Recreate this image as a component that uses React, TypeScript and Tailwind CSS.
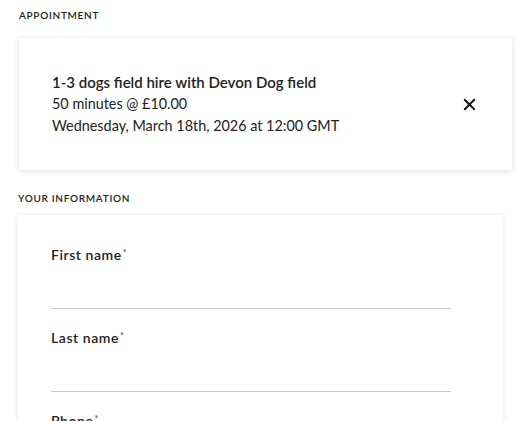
import { X } from 'lucide-react';

const font = { fontFamily: '"Source Sans Pro", Lato, "Noto Sans", sans-serif' };

function SectionTitle({ children }: { children: string }) {
  return (
    <h2 className="text-[10px] font-semibold uppercase tracking-[0.07em] text-[#222]">{children}</h2>
  );
}

function Field({ label }: { label: string }) {
  return (
    <div className="flex flex-col">
      <label className="text-[14px] font-semibold tracking-[0.04em] text-[#222] leading-5">
        {label}
        <sup className="text-[9px] text-[#555] ml-px">*</sup>
      </label>
      <input className="mt-5 h-6 w-[400px] border-b border-[#c8c8c8] outline-none" />
    </div>
  );
}

export default function App() {
  return (
    <div className="h-screen bg-white overflow-hidden" style={font}>
      <div className="pl-[19px] pt-[8px]">
        <SectionTitle>Appointment</SectionTitle>
        <div className="mt-[15px] w-[493px] h-[132px] bg-white shadow-[0_1px_6px_rgba(0,0,0,0.13)] flex items-center justify-between pl-[33px] pr-[33px]">
          <div className="text-[14.4px] leading-[22px] text-[#222]">
            <div className="font-semibold text-[15px]">1-3 dogs field hire with Devon Dog field</div>
            <div>50 minutes @ £10.00</div>
            <div>Wednesday, March 18th, 2026 at 12:00 GMT</div>
          </div>
          <button className="text-[#111]">
            <X size={19} strokeWidth={2.4} />
          </button>
        </div>
      </div>
      <div className="pl-[18px] mt-[21px]">
        <SectionTitle>Your information</SectionTitle>
        <div className="mt-[9px] w-[485px] bg-white shadow-[0_1px_6px_rgba(0,0,0,0.12)] pl-[33px] pt-[30px] pb-8 flex flex-col gap-[19px]">
          <Field label="First name" />
          <Field label="Last name" />
          <Field label="Phone" />
        </div>
      </div>
    </div>
  );
}
